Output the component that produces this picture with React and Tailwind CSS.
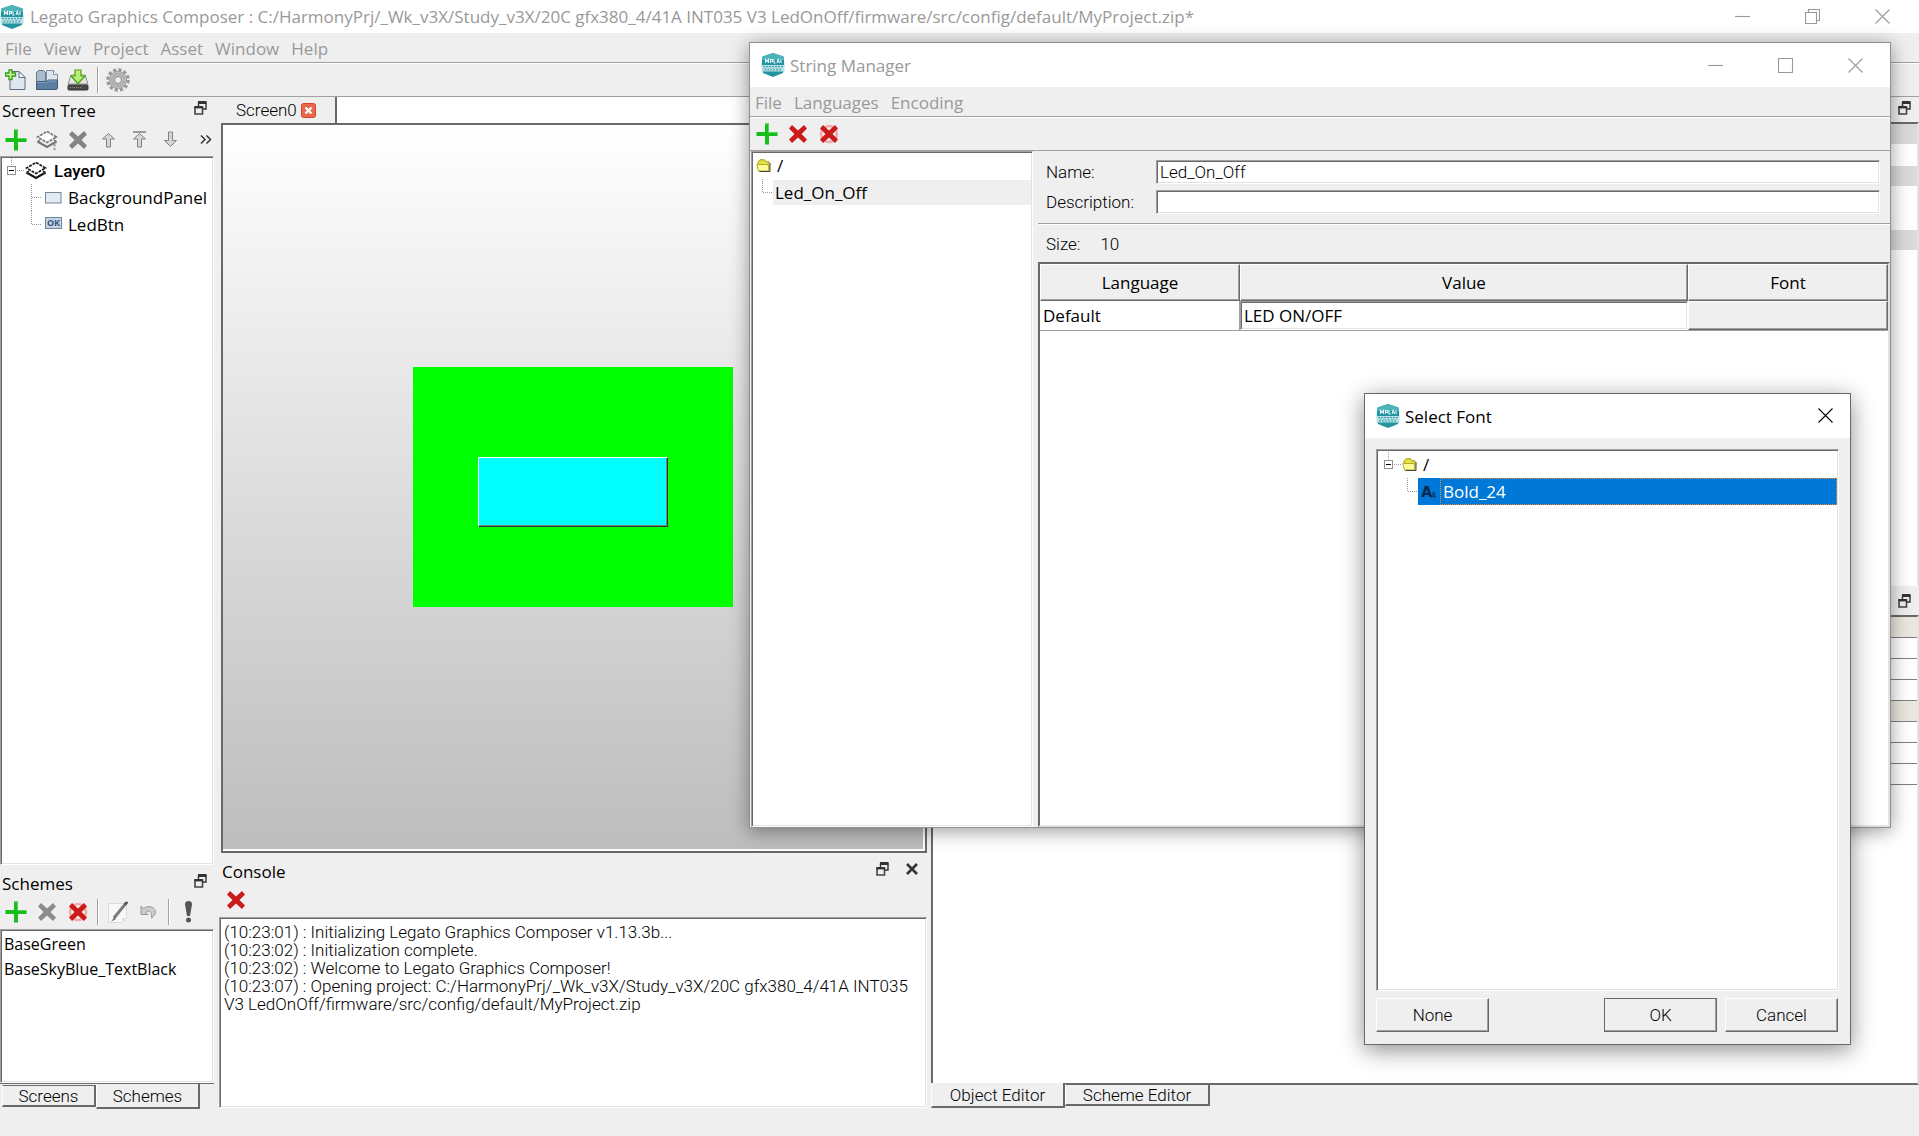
import { useState } from "react";

const sunken =
  "border border-t-[#a0a0a0] border-l-[#a0a0a0] border-r-white border-b-white shadow-[inset_1px_1px_#696969,inset_-1px_-1px_#e3e3e3]";
const raised =
  "border border-t-white border-l-white border-r-[#696969] border-b-[#696969] shadow-[inset_-1px_-1px_#a0a0a0]";
const thin = "font-[Roboto,'Noto_Sans_CJK_JP',sans-serif] font-light text-[17px]";

const LOG = [
  "(10:23:01) : Initializing Legato Graphics Composer v1.13.3b...",
  "(10:23:02) : Initialization complete.",
  "(10:23:02) : Welcome to Legato Graphics Composer!",
  "(10:23:07) : Opening project: C:/HarmonyPrj/_Wk_v3X/Study_v3X/20C gfx380_4/41A INT035 V3 LedOnOff/firmware/src/config/default/MyProject.zip",
].join("\n");

/* ---------- icons ---------- */

function LogoIcon() {
  return (
    <svg width="24" height="26" viewBox="0 0 24 26" className="shrink-0">
      <path d="M12 1 22.500 4.500C23.500 10 23.500 16 22 21L12 25 2 21C.5 16 .5 10 1.500 4.500Z" fill="#22949f" />
      <path d="M12 1 22.500 4.500 23 8 1 8 1.500 4.500Z" fill="#4db3bb" />
      <path d="M4.500 11V7.500l1.500 2 1.500-2V11M9.500 11V7.500h2v2h-2M13 7.500V11h1.500M16 11l1.200-3.500L18.500 11M20 7.500V11" fill="none" stroke="#e6f7f8" strokeWidth="1.100" />
      <path d="M.5 13h23v6.500h-23z" fill="#b9e0e4" />
      <path d="M2 14.500h20M3 18h18" stroke="#3c9fa9" strokeWidth="1" strokeDasharray="2 1" />
      <path d="M3 16.300h18" stroke="#7cc4cb" strokeDasharray="3 1" />
    </svg>
  );
}

function NewIcon() {
  return (
    <svg width="22" height="22" viewBox="0 0 22 22">
      <path d="M5 2.500h9l6 6V20.500H5z" fill="#dfe8f0" stroke="#5b7083" />
      <path d="M14 2.500v6h6z" fill="#fff" stroke="#5b7083" />
      <path d="M4 1h3v3h3.500v3H7v3.500H4V7H.5V4H4z" fill="#c9f5a8" stroke="#3c9a12" strokeWidth="1.300" />
    </svg>
  );
}

function OpenIcon() {
  return (
    <svg width="24" height="22" viewBox="0 0 24 22">
      <path d="M1.500 3.500l2-2h5l2 2V20.500h-9z" fill="#a9bccd" stroke="#65798c" />
      <path d="M11.500 1.500h7l4 4V16h-11z" fill="#dbe5ee" stroke="#7d90a3" />
      <path d="M18.500 1.500v4h4" fill="#fff" stroke="#7d90a3" />
      <path d="M1.500 20.500V13.500l1-1h9l2-1.500h9v8.500l-1 1z" fill="#5b7fa3" stroke="#3f5b78" />
      <path d="M2.500 13.500h9l2-1.500h8" fill="none" stroke="#84a3c2" />
    </svg>
  );
}

function SaveIcon() {
  return (
    <svg width="22" height="22" viewBox="0 0 22 22">
      <path d="M4 6h14l3 9H1z" fill="#e4e4e4" stroke="#909090" />
      <rect x="1" y="16" width="20" height="5" rx="1" fill="#4a4a4a" stroke="#333" />
      <path d="M3 18.500h11" stroke="#8b8b8b" strokeDasharray="1 1" />
      <path d="M8 1h6v6h4l-7 7.500L4 7h4z" fill="#b8ee7c" stroke="#4ea30c" strokeWidth="1.200" />
    </svg>
  );
}

function GearIcon() {
  return (
    <svg width="24" height="24" viewBox="0 0 24 24">
      <circle cx="12" cy="12" r="10" fill="none" stroke="#9a9a9a" strokeWidth="3.500" strokeDasharray="3.236 2" />
      <circle cx="12" cy="12" r="8.500" fill="#c2c2c2" stroke="#9c9c9c" />
      <circle cx="12" cy="12" r="6" fill="none" stroke="#adadad" strokeWidth="2" />
      <circle cx="12" cy="12" r="3.500" fill="#efefef" stroke="#858585" />
    </svg>
  );
}

function PlusIcon() {
  return (
    <svg width="22" height="22" viewBox="0 0 22 22">
      <path d="M9 .5h4V9h8.500v4H13v8.500H9V13H.5V9H9z" fill="#18bd18" />
      <path d="M9.500 1h3v8.500h8.500" fill="none" stroke="#55d355" />
    </svg>
  );
}

function CrossIcon({ fill, glow }) {
  return (
    <svg width="20" height="20" viewBox="0 0 20 20">
      {glow ? <circle cx="10" cy="10" r="8" fill="none" stroke="#f3a9a9" strokeWidth="2.500" /> : null}
      <path d="M4 1 10 6.500 16 1 19 4.500 13.500 10 19 15.500 16 19 10 13.500 4 19 1 15.500 6.500 10 1 4.500Z" fill={fill} />
    </svg>
  );
}

function LayersIcon({ color, badge }) {
  return (
    <svg width="22" height="20" viewBox="0 0 22 20">
      <path d="M11 1.500 20.500 7 11 12.500 1.500 7Z" fill="#fff" stroke={color} strokeWidth="1.600" strokeDasharray="3 1" />
      <path d="M1.500 11.500 11 17 20.500 11.500" fill="none" stroke={color} strokeWidth="2.200" />
      <path d="M4 10 1.500 11.500M18 10l2.500 1.500" stroke={color} strokeWidth="1.400" />
      {badge ? <path d="M18.500 14v2.500M18.500 18v2" stroke="#9a9a9a" strokeWidth="2" /> : null}
    </svg>
  );
}

function ArrowIcon({ down, bar }) {
  return (
    <svg width="15" height="17" viewBox="0 0 15 17">
      {bar ? <path d="M1 1h13" stroke="#6f6f6f" strokeWidth="1.300" /> : null}
      <path
        d={down ? "M5.500 1h4v8.500h4l-6 6-6-6h4z" : "M5.500 16h4V8h4l-6-5.500L1.500 8h4z"}
        fill="#d6d6d6"
        stroke="#828282"
      />
    </svg>
  );
}

function EditIcon() {
  return (
    <svg width="22" height="23" viewBox="0 0 22 23">
      <path d="M1.500 2.500h18V17l-4.500 4.500H1.500z" fill="#f8f8f8" stroke="#dadada" />
      <path d="M15 21.500V17h4.500z" fill="#e2e2e2" />
      <path d="M19.500 1.500 7 17" stroke="#7c7c7c" strokeWidth="3" />
      <path d="M20.500 1 18 3.500" stroke="#4e4e4e" strokeWidth="2" />
      <path d="M7.500 16 4 20.500l4.500-2z" fill="#6c6c6c" />
    </svg>
  );
}

function UndoIcon() {
  return (
    <svg width="17" height="15" viewBox="0 0 17 15">
      <path d="M1 1v8.500h7L5.500 7C9 4.500 12.500 7 11.500 13c5-3 5.500-9 0-11C8.500 1 5.500 2 3.500 3.700z" fill="#cdcdcd" stroke="#999" />
    </svg>
  );
}

function FloatIcon() {
  return (
    <svg width="13" height="14" viewBox="0 0 13 14" className="shrink-0">
      <path d="M4.500 5V2h7.500v6H9" fill="none" stroke="#333" strokeWidth="1.400" />
      <path d="M4 1.500h8.500" stroke="#333" strokeWidth="3" />
      <path d="M1 6h7.500v7H1z" fill="#efefef" stroke="#444" strokeWidth="1.600" />
      <path d="M.5 6.200h8.500" stroke="#333" strokeWidth="2.400" />
    </svg>
  );
}

function FolderIcon() {
  return (
    <svg width="15" height="13" viewBox="0 0 15 13" className="shrink-0">
      <path d="M2 3 4 .8h4.500l1.500 2h3V12H3z" fill="#e5e04c" stroke="#a39e10" />
      <path d="M.8 5.500h11.400L13 12H2.500z" fill="#fffb9d" stroke="#b3ad20" />
      <path d="M14 4v8.500H3.500" fill="none" stroke="#444" />
    </svg>
  );
}

function Expander() {
  return (
    <svg width="20" height="27" viewBox="0 0 20 27" className="shrink-0">
      <path d="M6.500 1v8M12 13.500h7" stroke="#9a9a9a" strokeDasharray="1 1" />
      <rect x="2.500" y="9.500" width="8" height="8" fill="#fff" stroke="#8f8f8f" />
      <path d="M4 13.500h5" stroke="#000" />
    </svg>
  );
}

function Branch({ last }) {
  return (
    <svg width="11" height="27" viewBox="0 0 11 27" className="shrink-0">
      <path d={last ? "M.5 0v14M1 13.500h10" : "M.5 0v27M1 13.500h10"} fill="none" stroke="#9a9a9a" strokeDasharray="1 1" />
    </svg>
  );
}

function CaptionIcon({ kind, color = "#999" }) {
  const d = {
    min: "M0 7.500h15",
    max: "M.5.5h14v14H.5z",
    restore: "M.5 3.500h11v11H.5zM3.500 3V.5h11v11H12",
    close: "M.5.5l14 14M14.500.5l-14 14",
  };
  return (
    <svg width="15" height="15" viewBox="0 0 15 15">
      <path d={d[kind]} fill="none" stroke={color} strokeWidth="1.100" />
    </svg>
  );
}

/* ---------- shared pieces ---------- */

function Tool({ label, children }) {
  return (
    <button aria-label={label} className="flex h-full w-[31px] items-center justify-center">
      {children}
    </button>
  );
}

function ToolSep() {
  return (
    <span className="flex h-full w-[9px] items-center justify-center">
      <span className="h-[26px] w-[2px] border-l border-[#a0a0a0] bg-white" />
    </span>
  );
}

function Caption({ label, kind, color }) {
  return (
    <button aria-label={label} className="flex h-full w-[70px] items-center justify-center">
      <CaptionIcon kind={kind} color={color} />
    </button>
  );
}

function MenuBar({ items }) {
  return (
    <nav className="flex h-[30px] shrink-0 items-center gap-[12px] border-b border-[#a0a0a0] pt-[2px] pl-[5px] text-[#999]">
      {items.map((item) => (
        <button key={item}>{item}</button>
      ))}
    </nav>
  );
}

function DockTitle({ title, closable }) {
  return (
    <div className="flex h-[28px] shrink-0 items-center pr-[7px] pl-[2px]">
      <h2 className="flex-1">{title}</h2>
      <button aria-label="Float" className="mb-[7px]">
        <FloatIcon />
      </button>
      {closable ? (
        <button aria-label="Close" className="mr-[2px] mb-[6px] ml-[17px]">
          <svg width="12" height="12" viewBox="0 0 12 12">
            <path d="M1 1l10 10M11 1 1 11" stroke="#333" strokeWidth="2.600" />
          </svg>
        </button>
      ) : null}
    </div>
  );
}

function BottomTab({ active, className, children }) {
  return (
    <button
      className={`${thin} border-r-2 border-b-2 border-l border-[#696969] border-l-white leading-[20px] ${
        active ? "h-[25px] bg-[#efefef]" : "mt-[1px] h-[22px] border-t border-t-[#696969]"
      } ${className || ""}`}
    >
      {children}
    </button>
  );
}

/* ---------- main window docks ---------- */

function LeftDock() {
  return (
    <aside className="flex w-[214px] shrink-0 flex-col">
      <DockTitle title="Screen Tree" />
      <div className="flex h-[31px] shrink-0 items-center pb-[2px]">
        <Tool label="Add"><PlusIcon /></Tool>
        <Tool label="Add layer"><LayersIcon color="#777" badge /></Tool>
        <Tool label="Delete"><CrossIcon fill="#858585" /></Tool>
        <Tool label="Move up"><ArrowIcon /></Tool>
        <Tool label="Move to top"><ArrowIcon bar /></Tool>
        <Tool label="Move down"><ArrowIcon down /></Tool>
        <button aria-label="More" className="ml-auto pr-[2px]">
          <svg width="12" height="9" viewBox="0 0 12 9">
            <path d="M1 .5l4 4-4 4M6.500.5l4 4-4 4" fill="none" stroke="#333" strokeWidth="1.500" />
          </svg>
        </button>
      </div>
      <ul className={`flex-1 bg-white pl-[4px] ${sunken}`}>
        <li className="flex h-[27px] items-center">
          <Expander />
          <LayersIcon color="#1a1a1a" />
          <span className={`${thin} ml-[7px] font-medium`}>Layer0</span>
        </li>
        <li className="flex h-[27px] items-center pl-[26px]">
          <Branch />
          <svg width="17" height="12" viewBox="0 0 17 12" className="ml-[3px]">
            <rect x=".5" y=".5" width="15.500" height="10.500" fill="#e2eaf3" stroke="#74859a" />
          </svg>
          <span className="ml-[6px]">BackgroundPanel</span>
        </li>
        <li className="flex h-[27px] items-center pl-[26px]">
          <Branch last />
          <span className="mb-[3px] ml-[3px] h-[12px] w-[17px] border border-[#74859a] bg-[#c3d3e5] text-center text-[9px] leading-[10px] font-bold text-[#3c5876]">
            OK
          </span>
          <span className="ml-[6px]">LedBtn</span>
        </li>
      </ul>

      <div className="mt-[5px]">
        <DockTitle title="Schemes" />
      </div>
      <div className="flex h-[31px] shrink-0 items-center pb-[3px]">
        <Tool label="Add scheme"><PlusIcon /></Tool>
        <Tool label="Delete scheme"><CrossIcon fill="#8c8c8c" /></Tool>
        <Tool label="Delete all"><CrossIcon fill="#cb1a1a" glow /></Tool>
        <ToolSep />
        <Tool label="Edit"><EditIcon /></Tool>
        <Tool label="Undo"><UndoIcon /></Tool>
        <ToolSep />
        <Tool label="Check">
          <svg width="9" height="22" viewBox="0 0 9 22">
            <path d="M1 3.500a3.500 3.500 0 0 1 7 0L6 15H3z" fill="#555" />
            <circle cx="4.500" cy="19" r="2.500" fill="#555" />
          </svg>
        </Tool>
      </div>
      <ul className={`h-[154px] bg-white pt-[2px] pl-[3px] text-[16px] leading-[25px] ${sunken}`}>
        <li>BaseGreen</li>
        <li>BaseSkyBlue_TextBlack</li>
      </ul>
      <div className="flex h-[25px] border-t border-[#696969] pl-[2px]">
        <BottomTab className="w-[94px]">Screens</BottomTab>
        <BottomTab active className="w-[104px]">Schemes</BottomTab>
      </div>
    </aside>
  );
}

function CenterArea() {
  return (
    <main className="ml-[5px] flex w-[708px] shrink-0 flex-col">
      <div className="flex h-[26px] shrink-0 bg-white">
        <button className={`${thin} flex w-[118px] items-center gap-[4px] border-r-2 border-[#696969] bg-[#efefef] pl-[17px]`}>
          Screen0
          <svg width="15" height="15" viewBox="0 0 15 15">
            <rect x=".5" y=".5" width="14" height="14" rx="2" fill="#e8694b" stroke="#d4472a" />
            <path d="M4.500 4.500l6 6M10.500 4.500l-6 6" stroke="#fff" strokeWidth="2.200" />
          </svg>
        </button>
      </div>
      <div className="ml-[2px] flex flex-1 border-2 border-[#696969]">
        <div className="flex flex-1 items-center justify-center border-r-2 border-b-2 border-white bg-linear-to-b from-white to-[#bdbdbd]">
          <div className="flex h-[240px] w-[320px] items-center justify-center bg-[#00ff00]">
            <button
              aria-label="LedBtn"
              className="mt-[10px] h-[70px] w-[190px] border border-t-white border-r-[#333] border-b-[#333] border-l-white bg-[#00ffff] shadow-[inset_-1px_-1px_#808080]"
            />
          </div>
        </div>
      </div>

      <div className="mt-[5px] ml-[1px]">
        <DockTitle title="Console" closable />
      </div>
      <div className="ml-[1px] flex h-[31px] shrink-0 items-start pb-[4px]">
        <Tool label="Clear console"><CrossIcon fill="#cb1a1a" /></Tool>
      </div>
      <textarea
        readOnly
        aria-label="Console output"
        value={LOG}
        className={`${thin} h-[191px] shrink-0 resize-none bg-white px-[4px] py-[5px] leading-[18px] ${sunken}`}
      />
    </main>
  );
}

function RightDock() {
  return (
    <section className="ml-[4px] flex min-w-0 flex-1 flex-col">
      <div className="flex h-[25px] shrink-0 justify-end pt-[4px] pr-[8px]"><FloatIcon /></div>
      <div className="h-[464px] shrink-0 border-t-2 border-r-2 border-t-[#696969] border-r-[#e3e3e3] bg-white">
        <div className="h-[20px] bg-[#dadada]" />
        <div className="mt-[22px] h-[20px] bg-[#dadada]" />
        <div className="mt-[44px] h-[20px] bg-[#dadada]" />
      </div>
      <div className="flex h-[29px] shrink-0 justify-end pt-[8px] pr-[8px]"><FloatIcon /></div>
      <div className="flex-1 border-t-2 border-r-2 border-b-2 border-l-2 border-[#696969] border-r-[#e3e3e3] bg-white">
        {[0, 1, 2, 3, 4, 5, 6, 7].map((row) => (
          <div key={row} className={`h-[21px] border-b border-[#808080] ${row % 4 === 0 ? "bg-[#ece7de]" : ""}`} />
        ))}
      </div>
      <div className="-mt-[2px] flex h-[25px]">
        <BottomTab active className="w-[134px]">Object Editor</BottomTab>
        <BottomTab className="w-[145px]">Scheme Editor</BottomTab>
      </div>
    </section>
  );
}

/* ---------- floating windows ---------- */

function StringManager({ name, setName }) {
  const [description, setDescription] = useState("");
  const [value, setValue] = useState("LED ON/OFF");

  return (
    <section className="absolute top-[42px] left-[749px] flex h-[786px] w-[1142px] flex-col border border-[#8f8f8f] bg-[#efefef] shadow-[0_3px_18px_rgba(0,0,0,0.4)]">
      <header className="flex h-[44px] shrink-0 items-center bg-white pl-[11px] text-[#999]">
        <LogoIcon />
        <h1 className="ml-[5px] flex-1 pt-[2px]">String Manager</h1>
        <Caption label="Minimize" kind="min" />
        <Caption label="Maximize" kind="max" />
        <Caption label="Close" kind="close" />
      </header>
      <MenuBar items={["File", "Languages", "Encoding"]} />
      <div className="flex h-[34px] shrink-0 items-center border-t border-b border-t-white border-b-[#a0a0a0] pl-[1px]">
        <Tool label="Add string"><PlusIcon /></Tool>
        <Tool label="Delete string"><CrossIcon fill="#cb1a1a" /></Tool>
        <Tool label="Delete all strings"><CrossIcon fill="#cb1a1a" glow /></Tool>
      </div>
      <div className="flex min-h-0 flex-1 pl-[1px]">
        <ul className={`w-[282px] shrink-0 bg-white pl-[4px] ${sunken}`}>
          <li className="flex h-[27px] items-center gap-[6px]">
            <FolderIcon />/
          </li>
          <li className="flex h-[27px] items-center pl-[6px]">
            <Branch last />
            <span className="mr-[1px] flex-1 bg-[#efefef] pl-[2px] leading-[25px]">Led_On_Off</span>
          </li>
        </ul>
        <div className="ml-[5px] flex flex-1 flex-col">
          <div className={`${thin} grid grid-cols-[110px_1fr] items-center gap-y-[6px] border-b border-[#a0a0a0] pt-[9px] pr-[10px] pb-[9px] pl-[8px]`}>
            <label htmlFor="string-name">Name:</label>
            <input
              id="string-name"
              value={name}
              onChange={(e) => setName(e.target.value)}
              className={`h-[24px] bg-white px-[3px] ${sunken}`}
            />
            <label htmlFor="string-desc">Description:</label>
            <input
              id="string-desc"
              value={description}
              onChange={(e) => setDescription(e.target.value)}
              className={`h-[24px] bg-white px-[3px] ${sunken}`}
            />
          </div>
          <p className={`${thin} flex h-[38px] items-center gap-[20px] border-t border-white pl-[8px]`}>
            <span>Size:</span>
            <span>{value.length}</span>
          </p>
          <div className="flex-1 border-2 border-t-[#696969] border-r-[#e3e3e3] border-b-[#e3e3e3] border-l-[#696969] bg-white">
            <table className="w-full table-fixed border-separate border-spacing-0">
              <thead>
                <tr className="h-[37px]">
                  <th className={`w-[200px] bg-[#efefef] font-normal ${raised}`}>Language</th>
                  <th className={`bg-[#efefef] font-normal ${raised}`}>Value</th>
                  <th className={`w-[200px] bg-[#efefef] font-normal ${raised}`}>Font</th>
                </tr>
              </thead>
              <tbody>
                <tr className="h-[30px]">
                  <td className="border-r border-b border-[#a0a0a0] p-0 pl-[3px]">Default</td>
                  <td className="border-b border-[#a0a0a0] p-0">
                    <input
                      aria-label="Value"
                      value={value}
                      onChange={(e) => setValue(e.target.value)}
                      className={`block h-[29px] w-full px-[3px] ${sunken}`}
                    />
                  </td>
                  <td className="border-b border-[#a0a0a0] p-0">
                    <button aria-label="Choose font" className={`block h-[29px] w-full bg-[#efefef] ${raised}`} />
                  </td>
                </tr>
              </tbody>
            </table>
          </div>
        </div>
      </div>
    </section>
  );
}

function SelectFont() {
  const button = `${thin} h-[34px] w-[113px] ${raised}`;
  return (
    <section className="absolute top-[393px] left-[1364px] flex h-[652px] w-[487px] flex-col border border-[#696969] bg-[#efefef] shadow-[0_5px_22px_rgba(0,0,0,0.45)]">
      <header className="flex h-[44px] shrink-0 items-center bg-white pl-[11px]">
        <LogoIcon />
        <h1 className="ml-[5px] flex-1 pt-[2px]">Select Font</h1>
        <button aria-label="Close" className="flex h-full w-[50px] items-center justify-center pb-[1px]">
          <CaptionIcon kind="close" color="#000" />
        </button>
      </header>
      <div className="flex flex-1 flex-col px-[11px] pt-[11px] pb-[12px]">
        <ul className={`flex-1 bg-white pt-[1px] pl-[5px] ${sunken}`}>
          <li className="flex h-[27px] items-center">
            <Expander />
            <FolderIcon />
            <span className="ml-[6px]">/</span>
          </li>
          <li className="flex h-[27px] items-center pl-[25px]">
            <Branch last />
            <span className="mr-[1px] flex h-full flex-1 items-center bg-[#0078d7]">
              <svg width="22" height="20" viewBox="0 0 22 20">
                <text x="3" y="15" fontFamily="Inter, sans-serif" fontSize="15" fontWeight="800" fill="#062b52">A</text>
                <text x="13" y="16" fontFamily="Inter, sans-serif" fontSize="7" fontWeight="800" fill="#0b3f74">A</text>
              </svg>
              <span className="h-full flex-1 border border-dotted border-[#ff8728] pl-[2px] leading-[25px] text-white">
                Bold_24
              </span>
            </span>
          </li>
        </ul>
        <div className="mt-[7px] flex gap-[8px] pr-[1px]">
          <button className={`${button} mr-auto`}>None</button>
          <button className={`${button} outline-1 -outline-offset-1 outline-[#696969]`}>OK</button>
          <button className={button}>Cancel</button>
        </div>
      </div>
    </section>
  );
}

export default function App() {
  const [name, setName] = useState("Led_On_Off");

  return (
    <div className="relative flex h-screen flex-col overflow-hidden bg-[#efefef] font-['Open_Sans','Noto_Sans_CJK_JP',sans-serif] text-[17px] leading-[24px] text-black">
      <header className="flex h-[33px] shrink-0 items-center bg-white pr-[2px] text-[#999]">
        <LogoIcon />
        <h1 className="ml-[6px] flex-1 truncate">
          Legato Graphics Composer : C:/HarmonyPrj/_Wk_v3X/Study_v3X/20C gfx380_4/41A INT035 V3 LedOnOff/firmware/src/config/default/MyProject.zip*
        </h1>
        <Caption label="Minimize" kind="min" />
        <Caption label="Restore" kind="restore" />
        <Caption label="Close" kind="close" />
      </header>
      <MenuBar items={["File", "View", "Project", "Asset", "Window", "Help"]} />
      <div className="flex h-[34px] shrink-0 items-center border-t border-b border-t-white border-b-[#a0a0a0]">
        <Tool label="New"><NewIcon /></Tool>
        <Tool label="Open"><OpenIcon /></Tool>
        <Tool label="Save"><SaveIcon /></Tool>
        <ToolSep />
        <Tool label="Settings"><GearIcon /></Tool>
      </div>
      <div className="flex min-h-0 flex-1">
        <LeftDock />
        <CenterArea />
        <RightDock />
      </div>
      <footer className="h-[28px] shrink-0" />

      <StringManager name={name} setName={setName} />
      <SelectFont />
    </div>
  );
}
